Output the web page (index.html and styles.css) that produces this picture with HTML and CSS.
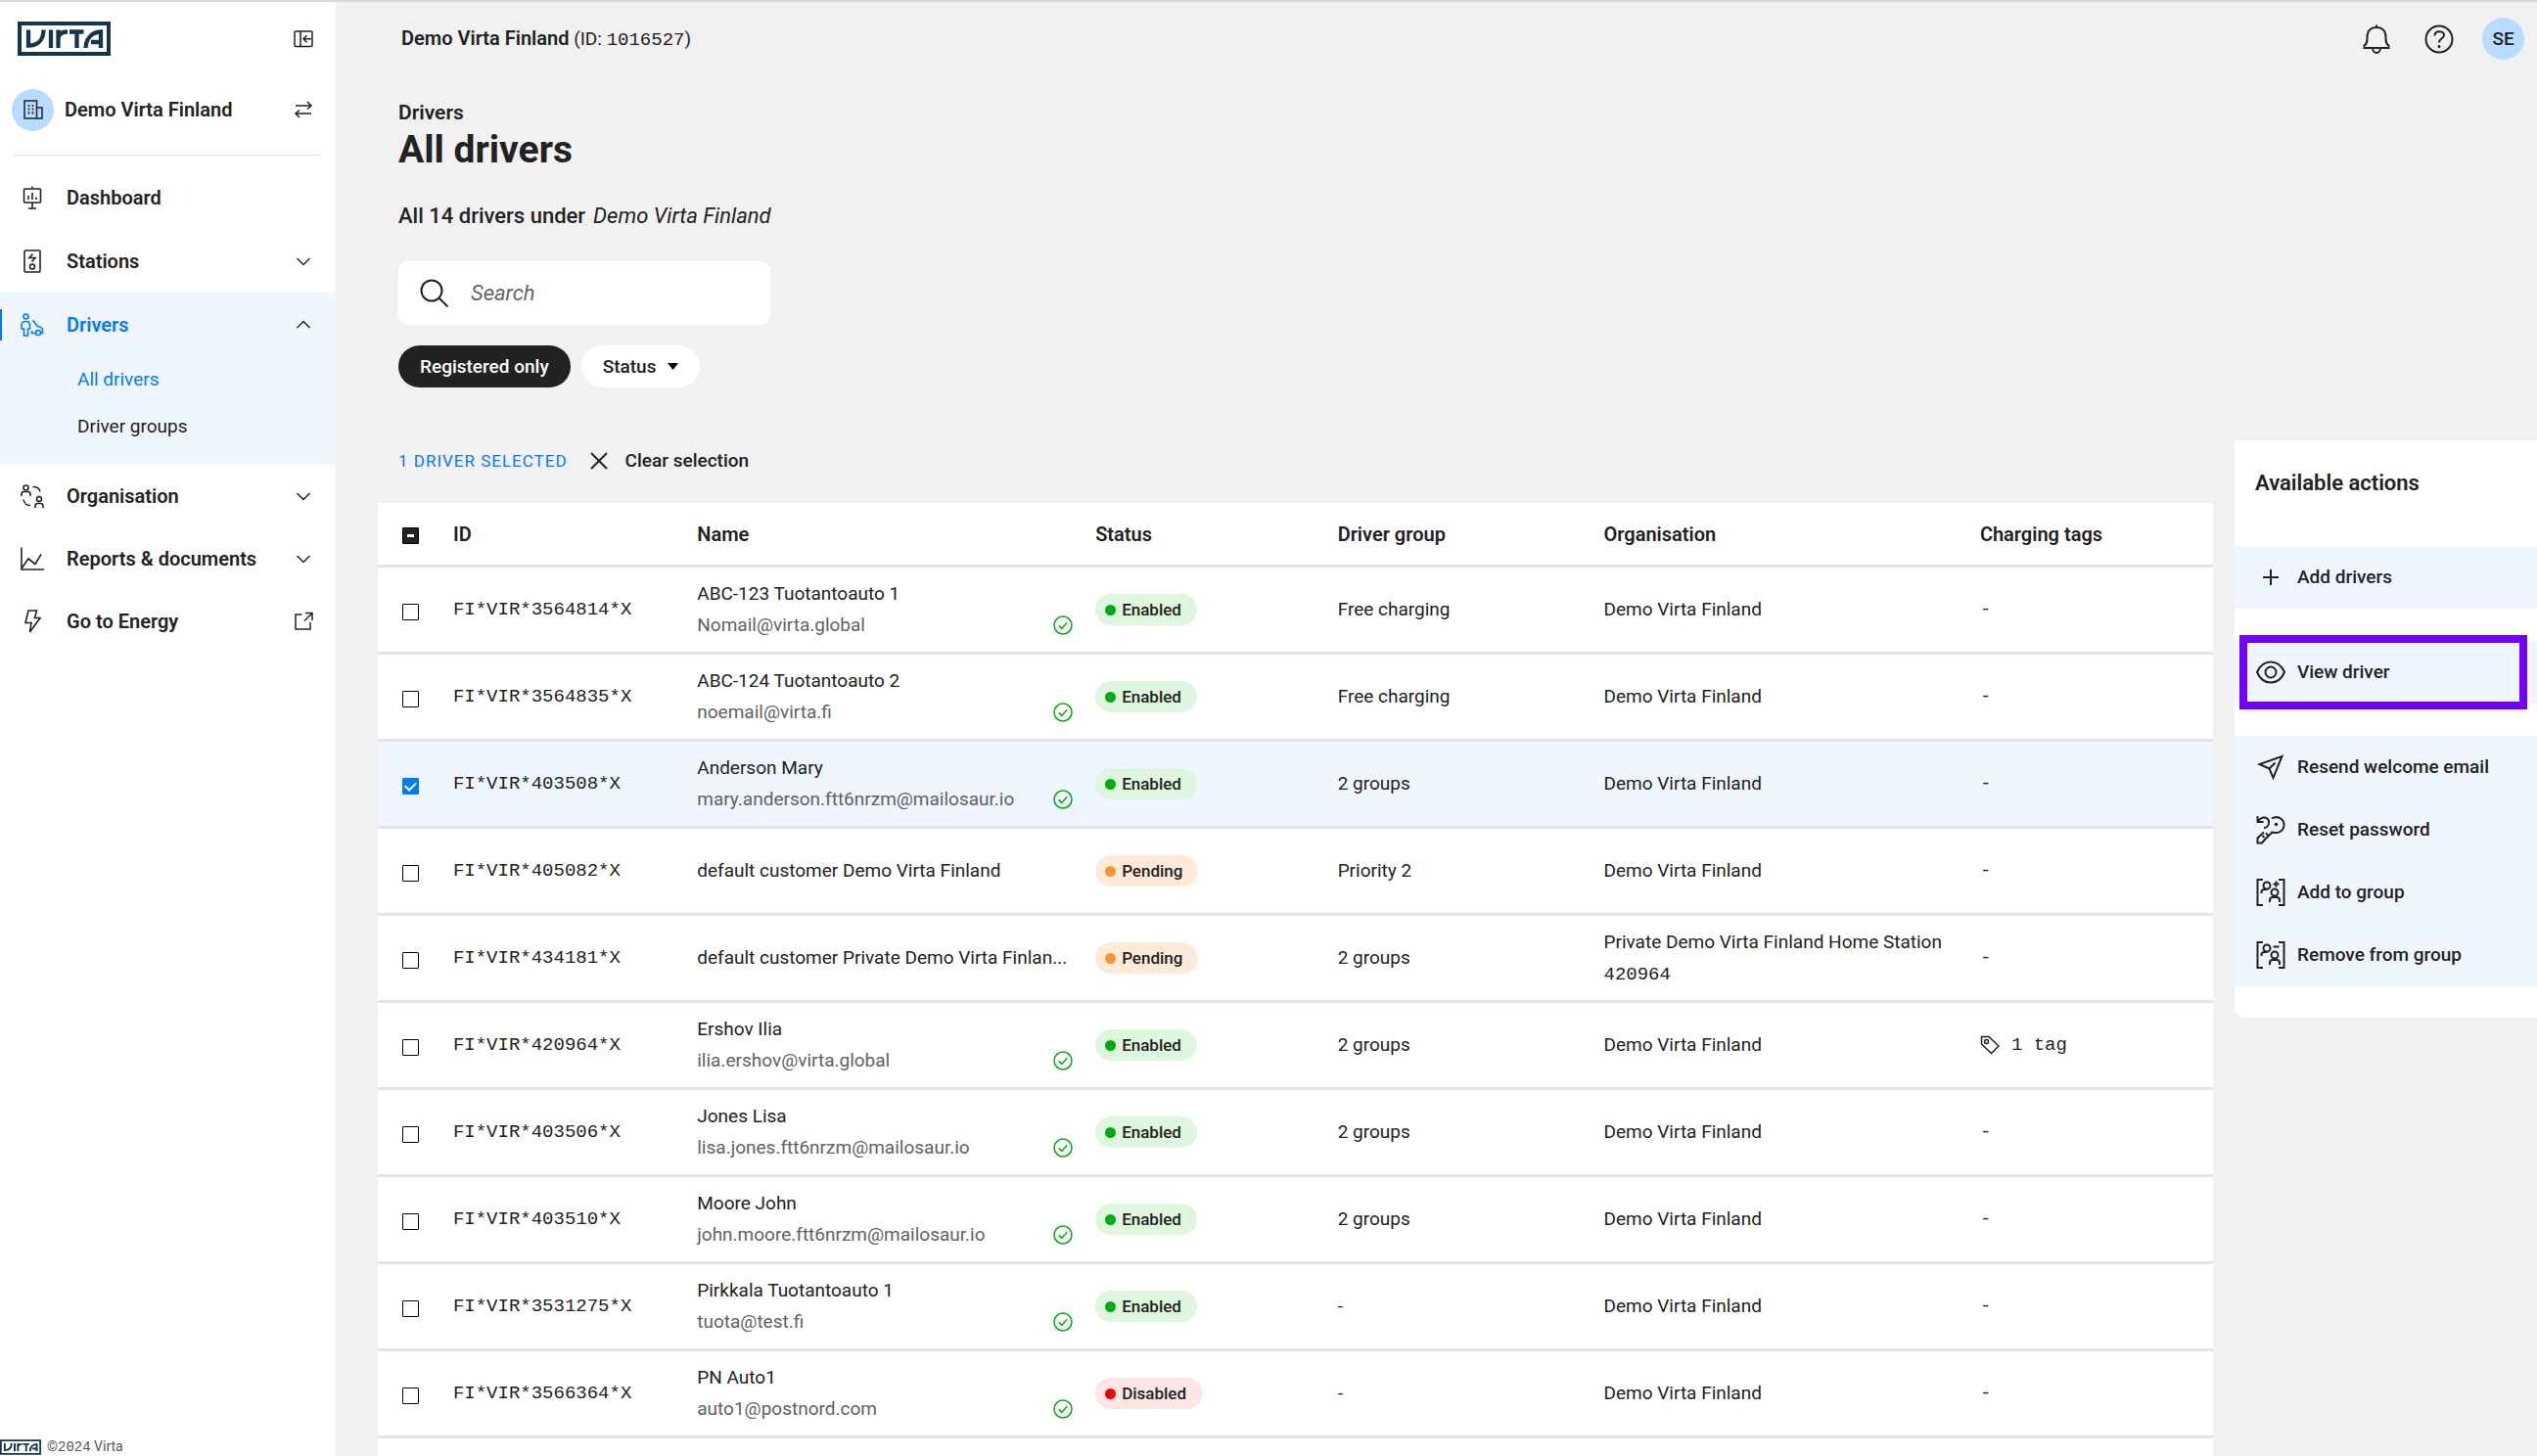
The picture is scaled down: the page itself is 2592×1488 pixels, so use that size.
FILE: index.html
```html
<!DOCTYPE html>
<html lang="en">
<head>
<meta charset="utf-8">
<meta name="viewport" content="width=device-width, initial-scale=1">
<title>All drivers - Virta</title>
<link rel="stylesheet" href="styles.css">
</head>
<body>
<svg class="sprite" aria-hidden="true">
  <symbol id="logo" viewBox="0 0 95 35">
    <path d="M2 2H93V33H2Z" stroke-width="4"/>
    <path d="M11 8.500V24.500C20.500 24.500 26.500 19 26.500 8.500M34 8.500V27M41.500 8.500V27M41.500 17C42 12.500 45 10.500 51 10.500M53 10.500H67.500M60.500 10.500V27M69.500 27C70 17.500 75.500 11 85 10.500V27M75 21H85" stroke-width="4.300"/>
  </symbol>
  <symbol id="chevron" viewBox="0 0 20 20"><path d="M3.500 7l6.500 6.500L16.500 7"/></symbol>
  <symbol id="verified" viewBox="0 0 20 20"><circle cx="10" cy="10" r="9"/><path d="M5.800 10.400l3 3 5.400-6.200"/></symbol>
</svg>

<div class="app">
  <aside class="sidebar">
    <div class="brand">
      <a href="#" aria-label="Virta"><svg class="logo"><use href="#logo"/></svg></a>
      <button class="icon-button" type="button" aria-label="Collapse menu"><svg class="icon-small" viewBox="0 0 20 20"><rect x="1" y="2" width="18" height="15.500" rx="1"/><path d="M7 2v15.500M18 9.800H10.500M13.500 6.300L10 9.800l3.500 3.500"/></svg></button>
    </div>
    <div class="tenant">
      <span class="avatar"><svg class="icon-small" viewBox="0 0 20 20"><path d="M1 19V1h12.500v18zM13.500 8H19v11h-5.500"/><path d="M5.500 5v2M5.500 8.500v2M5.500 12v2.500M9.500 5v2M9.500 8.500v2M9.500 12v2.500"/></svg></span>
      <span class="tenant-name">Demo Virta Finland</span>
      <button class="icon-button" type="button" aria-label="Switch organisation"><svg class="icon-small" viewBox="0 0 20 20"><path d="M2 6h16M14 2l4 4-4 3.500M18 14H2M6 10.500L2 14l4 4"/></svg></button>
    </div>
    <nav class="nav">
      <a class="nav-item" href="#"><svg class="icon" viewBox="0 0 24 24"><rect x="3.500" y="3" width="17" height="14" rx="1"/><path d="M12 .500V3M12 17v6M8 23h8M8 10v4M12 7v7M16 11.500V14"/></svg><span>Dashboard</span></a>
      <a class="nav-item" href="#"><svg class="icon" viewBox="0 0 24 24"><rect x="4" y="1" width="16" height="22" rx="1"/><path d="M12.500 4.500L9 8.500h6l-3.500 4"/><circle cx="12" cy="17.500" r="2.500"/></svg><span>Stations</span><svg class="icon-small"><use href="#chevron"/></svg></a>
      <div class="nav-group">
        <a class="nav-item current" href="#"><svg class="icon" viewBox="0 0 24 24"><circle cx="5.500" cy="3.500" r="2.500"/><path d="M3.500 23h4v-7h2v-4c0-2.300-1.500-3.500-4-3.500S1 9.700 1 12v4h2.500zM12 7.500c3 1 3.500 4.500 5.500 6 2.500.500 5 1 5 3V20.500h-2M15.500 20.500H11.500v-2.500"/><circle cx="18" cy="20" r="2.500"/></svg><span>Drivers</span><svg class="icon-small up"><use href="#chevron"/></svg></a>
        <a class="sub-item current" href="#">All drivers</a>
        <a class="sub-item" href="#">Driver groups</a>
      </div>
      <a class="nav-item" href="#"><svg class="icon" viewBox="0 0 24 24"><circle cx="5.500" cy="3.500" r="2.500"/><path d="M1 12V10c0-1.500 1-2.500 2.500-2.500h4C9 7.500 10 8.500 10 10v2M12.500 2.500c4 0 7 1.500 7.500 5M3 15.500c.500 3.500 3.500 6 7 6M15 24v-2c0-1.500 1-2.500 2.500-2.500h3c1.500 0 2.500 1 2.500 2.500v2"/><circle cx="19" cy="15" r="2.500"/></svg><span>Organisation</span><svg class="icon-small"><use href="#chevron"/></svg></a>
      <a class="nav-item" href="#"><svg class="icon" viewBox="0 0 24 24"><path d="M1 .500V23h23M1 22l7-10 7 5.500 6-10"/></svg><span>Reports &amp; documents</span><svg class="icon-small"><use href="#chevron"/></svg></a>
      <a class="nav-item" href="#"><svg class="icon" viewBox="0 0 24 24"><path d="M8 1h8.500l-2 7.500H20L9.500 23l1.500-9.500H5z"/></svg><span>Go to Energy</span><svg class="icon-small" viewBox="0 0 20 20"><path d="M8.500 3H2v15h15V11M12 1.500h7V9M19 1.500L11 9.500"/></svg></a>
    </nav>
    <footer class="copyright"><svg class="logo-small"><use href="#logo"/></svg><span>©<span class="num">2024</span> Virta</span></footer>
  </aside>

  <main class="main">
    <header class="topbar">
      <p class="topbar-org"><strong>Demo Virta Finland</strong> (ID: <span class="num">1016527</span>)</p>
      <button class="icon-button" type="button" aria-label="Notifications"><svg class="icon-large" viewBox="0 0 30 30"><path d="M15 3V0.500M2.500 24v-2.500C5.500 20 5.500 17 5.500 13 5.500 7 9 3 15 3s9.500 4 9.500 10c0 4 0 7 3 8.500V24zM11 24c0 6.500 8 6.500 8 0"/></svg></button>
      <button class="icon-button" type="button" aria-label="Help"><svg class="icon-large" viewBox="0 0 30 30"><circle cx="15" cy="15" r="13.500"/><path d="M10.500 11.500c0-6 9.500-5.500 9.500-.500 0 3.500-5 3-5 7.500"/><circle class="dot" cx="15" cy="22.500" r="1.500"/></svg></button>
      <button class="avatar" type="button">SE</button>
    </header>

    <div class="intro">
      <p class="section">Drivers</p>
      <h1>All drivers</h1>
      <p class="summary"><span>All 14 drivers under</span><em>Demo Virta Finland</em></p>
      <label class="search"><svg class="icon-large" viewBox="0 0 30 30"><circle cx="12" cy="12" r="10.500"/><path d="M19.500 19.500l9 9"/></svg><input type="search" placeholder="Search" aria-label="Search"></label>
      <div class="filters">
        <button class="chip active" type="button" aria-pressed="true">Registered only</button>
        <button class="chip" type="button" aria-haspopup="true">Status<svg class="caret" viewBox="0 0 11 7"><path d="M0 0h11L5.500 7z"/></svg></button>
      </div>
    </div>

    <div class="columns">
      <section class="list">
        <div class="selection">
          <span class="selected-count">1 driver selected</span>
          <button class="clear" type="button"><svg class="icon-small" viewBox="0 0 20 20"><path d="M2 2l16 16M18 2L2 18"/></svg>Clear selection</button>
        </div>
        <div class="table-card">
        <table class="drivers">
          <colgroup><col class="c-check"><col class="c-id"><col class="c-name"><col class="c-status"><col class="c-group"><col class="c-org"><col class="c-tags"></colgroup>
          <thead>
            <tr><th><input class="mixed" type="checkbox" aria-label="Select all"></th><th>ID</th><th>Name</th><th>Status</th><th>Driver group</th><th>Organisation</th><th>Charging tags</th></tr>
          </thead>
          <tbody>
            <tr><td><input type="checkbox" aria-label="Select ABC-123"></td><td class="num">FI*VIR*3564814*X</td><td><div>ABC-123 Tuotantoauto 1</div><div class="email"><span>Nomail@virta.global</span><svg><use href="#verified"/></svg></div></td><td><span class="pill enabled">Enabled</span></td><td>Free charging</td><td>Demo Virta Finland</td><td class="num">-</td></tr>
            <tr><td><input type="checkbox" aria-label="Select ABC-124"></td><td class="num">FI*VIR*3564835*X</td><td><div>ABC-124 Tuotantoauto 2</div><div class="email"><span>noemail@virta.fi</span><svg><use href="#verified"/></svg></div></td><td><span class="pill enabled">Enabled</span></td><td>Free charging</td><td>Demo Virta Finland</td><td class="num">-</td></tr>
            <tr class="selected"><td><input type="checkbox" checked aria-label="Select Anderson Mary"></td><td class="num">FI*VIR*403508*X</td><td><div>Anderson Mary</div><div class="email"><span>mary.anderson.ftt6nrzm@mailosaur.io</span><svg><use href="#verified"/></svg></div></td><td><span class="pill enabled">Enabled</span></td><td>2 groups</td><td>Demo Virta Finland</td><td class="num">-</td></tr>
            <tr><td><input type="checkbox" aria-label="Select default customer"></td><td class="num">FI*VIR*405082*X</td><td>default customer Demo Virta Finland</td><td><span class="pill pending">Pending</span></td><td>Priority 2</td><td>Demo Virta Finland</td><td class="num">-</td></tr>
            <tr><td><input type="checkbox" aria-label="Select default customer Private"></td><td class="num">FI*VIR*434181*X</td><td>default customer Private Demo Virta Finlan...</td><td><span class="pill pending">Pending</span></td><td>2 groups</td><td>Private Demo Virta Finland Home Station <span class="num">420964</span></td><td class="num">-</td></tr>
            <tr><td><input type="checkbox" aria-label="Select Ershov Ilia"></td><td class="num">FI*VIR*420964*X</td><td><div>Ershov Ilia</div><div class="email"><span>ilia.ershov@virta.global</span><svg><use href="#verified"/></svg></div></td><td><span class="pill enabled">Enabled</span></td><td>2 groups</td><td>Demo Virta Finland</td><td class="num"><span class="tag"><svg class="icon-small" viewBox="0 0 20 20"><path d="M1.500 1.500h7.500L19 11l-7.500 7.500L1.500 9z"/><circle cx="6.500" cy="6.500" r="2"/></svg>1 tag</span></td></tr>
            <tr><td><input type="checkbox" aria-label="Select Jones Lisa"></td><td class="num">FI*VIR*403506*X</td><td><div>Jones Lisa</div><div class="email"><span>lisa.jones.ftt6nrzm@mailosaur.io</span><svg><use href="#verified"/></svg></div></td><td><span class="pill enabled">Enabled</span></td><td>2 groups</td><td>Demo Virta Finland</td><td class="num">-</td></tr>
            <tr><td><input type="checkbox" aria-label="Select Moore John"></td><td class="num">FI*VIR*403510*X</td><td><div>Moore John</div><div class="email"><span>john.moore.ftt6nrzm@mailosaur.io</span><svg><use href="#verified"/></svg></div></td><td><span class="pill enabled">Enabled</span></td><td>2 groups</td><td>Demo Virta Finland</td><td class="num">-</td></tr>
            <tr><td><input type="checkbox" aria-label="Select Pirkkala"></td><td class="num">FI*VIR*3531275*X</td><td><div>Pirkkala Tuotantoauto 1</div><div class="email"><span>tuota@test.fi</span><svg><use href="#verified"/></svg></div></td><td><span class="pill enabled">Enabled</span></td><td>-</td><td>Demo Virta Finland</td><td class="num">-</td></tr>
            <tr><td><input type="checkbox" aria-label="Select PN Auto1"></td><td class="num">FI*VIR*3566364*X</td><td><div>PN Auto1</div><div class="email"><span>auto1@postnord.com</span><svg><use href="#verified"/></svg></div></td><td><span class="pill disabled">Disabled</span></td><td>-</td><td>Demo Virta Finland</td><td class="num">-</td></tr>
          </tbody>
        </table>
        </div>
      </section>

      <aside class="actions">
        <h2>Available actions</h2>
        <div class="action-band">
          <button class="action" type="button"><svg class="icon-large" viewBox="0 0 30 30"><path d="M15 7v16M7 15h16"/></svg>Add drivers</button>
        </div>
        <div class="action-band highlighted">
          <button class="action" type="button"><svg class="icon-large" viewBox="0 0 30 30"><path d="M1 15C4 8 9 4.500 15 4.500S26 8 29 15C26 22 21 25.500 15 25.500S4 22 1 15z"/><circle cx="15" cy="15" r="5.500"/></svg>View driver</button>
        </div>
        <div class="action-band">
          <button class="action" type="button"><svg class="icon-large" viewBox="0 0 30 30"><path d="M26.500 4L3.500 12l10 4.500 4 9.500zM13.500 16.500l6-6"/></svg>Resend welcome email</button>
          <button class="action" type="button"><svg class="icon-large" viewBox="0 0 30 30"><path d="M1.500 1v6h6M2 6.500C6 0 13 2 13 7.500c0 3-2 5.500-5 5.500M16 3.500C22 0 28.500 4 28.500 10c0 6-6 9.500-12 7.500L8.500 25.500 6 28.500H1.500V23.500L8 17.500M6.500 21l2 2M10 18.500l2 2"/><circle class="dot" cx="20.500" cy="9.500" r="1.800"/></svg>Reset password</button>
          <button class="action" type="button"><svg class="icon-large" viewBox="0 0 30 30"><path d="M7 2H1.500v26H7M23 2h5.500v26H23M5.500 16v-1.500c0-1.500 1-2.500 3-2.500h3M14 25v-2c0-2 1-3 3-3h4c2 0 3 1 3 3v2M20.500 3.500v6M17.500 6.500h6"/><circle cx="11" cy="8" r="3.500"/><circle cx="19" cy="15" r="3.500"/></svg>Add to group</button>
          <button class="action" type="button"><svg class="icon-large" viewBox="0 0 30 30"><path d="M7 2H1.500v26H7M23 2h5.500v26H23M5.500 16v-1.500c0-1.500 1-2.500 3-2.500h3M14 25v-2c0-2 1-3 3-3h4c2 0 3 1 3 3v2M17.500 6.500h6"/><circle cx="11" cy="8" r="3.500"/><circle cx="19" cy="15" r="3.500"/></svg>Remove from group</button>
        </div>
      </aside>
    </div>
  </main>
</div>
</body>
</html>
```
FILE: styles.css
```css
:root {
  --ink: #222;
  --muted: #626262;
  --blue: #007aff;
  --tint: #eff6ff;
  --line: #e5e5e5;
  --page: #f1f1f1;
}

* { box-sizing: border-box; }

body {
  margin: 0;
  background: var(--page);
  color: var(--ink);
  font: 400 19px/32px Roboto, "Noto Sans", sans-serif;
}

h1, h2, p { margin: 0; }
a { color: inherit; text-decoration: none; }

button {
  border: 0;
  padding: 0;
  background: none;
  color: inherit;
  font: inherit;
  cursor: pointer;
}

svg {
  flex: none;
  display: block;
  fill: none;
  stroke: currentColor;
  stroke-width: 2;
}

.sprite { position: absolute; width: 0; height: 0; }
.icon-small { width: 20px; height: 20px; stroke-width: 1.5; }
.icon { width: 24px; height: 24px; stroke-width: 1.6; }
.icon-large { width: 30px; height: 30px; }
.dot { fill: currentColor; stroke: none; }
.num { font-family: "Liberation Mono", monospace; }

.app {
  display: grid;
  grid-template-columns: 343px minmax(0, 1fr);
  height: 100vh;
  border-top: 2px solid #d9d9d9;
}

/* Sidebar */

.sidebar {
  display: flex;
  flex-direction: column;
  background: #fff;
}

.brand,
.tenant {
  display: flex;
  align-items: center;
  justify-content: space-between;
  padding-right: 23px;
}

.brand { height: 75px; padding-left: 18px; }
.logo { width: 95px; height: 35px; color: #17344f; }

.tenant {
  height: 70px;
  gap: 11px;
  padding-left: 12px;
}

.tenant-name { flex: 1; font-size: 20px; font-weight: 600; }

.avatar {
  display: grid;
  place-items: center;
  width: 43px;
  height: 43px;
  border-radius: 50%;
  background: #b8dbff;
  font-weight: 500;
}

.nav::before {
  content: "";
  display: block;
  height: 1px;
  margin: 11px 16px 10px 14px;
  background: #ddd;
}

.nav-item {
  position: relative;
  display: flex;
  align-items: center;
  gap: 23px;
  height: 65px;
  padding: 0 23px 0 21px;
  font-size: 20px;
  font-weight: 600;
}

.nav-item span { flex: 1; }
.nav-item .up { transform: rotate(180deg); color: var(--ink); }
.nav-group { padding-bottom: 15px; background: var(--tint); }
.nav-group ~ .nav-item { height: 64px; }
.nav-item.current, .sub-item.current { color: var(--blue); }

.nav-item.current::before {
  content: "";
  position: absolute;
  left: 0;
  width: 2px;
  height: 32px;
  background: var(--blue);
}

.sub-item {
  display: block;
  padding-left: 79px;
  line-height: 48px;
}

.copyright {
  display: flex;
  align-items: center;
  gap: 6px;
  margin-top: auto;
  color: #555;
  font-size: 14px;
  line-height: 18px;
}

.logo-small { width: 42px; height: 16px; color: #17344f; }

/* Main column */

.main {
  display: flex;
  flex-direction: column;
  padding-left: 43px;
  overflow: hidden;
}

.topbar {
  display: flex;
  align-items: center;
  gap: 34px;
  height: 75px;
  padding: 0 13px 0 24px;
}

.topbar-org { flex: 1; }
.topbar-org strong { font-size: 20px; font-weight: 600; }
.topbar .avatar { margin-left: -5px; }

.intro { padding: 25px 21px 0; }
.section { font-size: 21px; font-weight: 600; line-height: 26px; }
h1 { font-size: 39px; font-weight: 700; line-height: 50px; }

.summary {
  display: flex;
  gap: 8px;
  margin-top: 28px;
  font-size: 22px;
  font-weight: 500;
  line-height: 30px;
}

.summary em { font-weight: 400; }

.search {
  display: flex;
  align-items: center;
  gap: 22px;
  width: 380px;
  height: 65px;
  margin-top: 31px;
  padding: 0 22px;
  border-radius: 10px;
  background: #fff;
}

.search input {
  width: 100%;
  border: 0;
  padding: 0;
  outline: 0;
  background: none;
  font: italic 22px/30px Roboto, sans-serif;
}

.search input::placeholder { color: #666; }

.filters { display: flex; gap: 11px; margin-top: 21px; }

.chip {
  display: flex;
  align-items: center;
  gap: 12px;
  height: 43px;
  padding: 0 22px;
  border-radius: 22px;
  background: #fff;
  font-weight: 500;
}

.chip.active { background: var(--ink); color: #fff; }
.caret { width: 11px; height: 7px; fill: #000; stroke: none; }

.columns {
  flex: 1;
  display: grid;
  grid-template-columns: minmax(0, 1fr) 309px;
  align-items: start;
  gap: 22px;
  margin-top: 54px;
}

.list {
  display: flex;
  flex-direction: column;
  height: 100%;
}

.selection {
  display: flex;
  align-items: center;
  gap: 22px;
  height: 42px;
  margin-bottom: 22px;
  padding-left: 21px;
}

.selected-count {
  color: var(--blue);
  font-size: 17px;
  letter-spacing: 1px;
  text-transform: uppercase;
}

.clear { display: flex; align-items: center; gap: 17px; font-weight: 500; }
.clear svg { stroke-width: 2; }

/* Table */

.table-card { flex: 1; background: #fff; }

.drivers {
  width: 100%;
  border-spacing: 0;
  table-layout: fixed;
}

.c-check { width: 4.1%; }
.c-id { width: 13.3%; }
.c-name { width: 21.7%; }
.c-status { width: 13.2%; }
.c-group { width: 14.5%; }
.c-org { width: 20.5%; }

.drivers th,
.drivers td {
  height: 89px;
  padding: 0;
  border-bottom: 3px solid var(--line);
  text-align: left;
}

.drivers th { height: 66px; font-size: 20px; font-weight: 600; }
.drivers td:nth-child(3), .drivers td:nth-child(6) { padding-right: 23px; }
.drivers th:first-child, .drivers td:first-child { padding-left: 25px; }
.selected { background: var(--tint); }

.drivers input {
  appearance: none;
  display: grid;
  place-items: center;
  width: 17px;
  height: 17px;
  margin: 4px 0 0;
  border: 1px solid #000;
  border-radius: 1px;
}

.drivers input.mixed { background: var(--ink); }
.drivers input.mixed::before { content: ""; width: 7px; height: 3px; background: #fff; }
.drivers input:checked { border-color: var(--blue); background: var(--blue); }

.drivers input:checked::before {
  content: "";
  width: 9px;
  height: 5px;
  margin-top: -2px;
  border: solid #fff;
  border-width: 0 0 2px 2px;
  transform: rotate(-45deg);
}

.email {
  display: flex;
  align-items: center;
  justify-content: space-between;
  color: var(--muted);
}

.email svg { width: 20px; height: 20px; color: #00ab0e; stroke-width: 1.5; }

.pill {
  display: inline-flex;
  align-items: center;
  gap: 6px;
  height: 32px;
  padding: 0 16px 0 10px;
  border-radius: 16px;
  font-size: 17px;
  font-weight: 500;
  vertical-align: middle;
}

.pill::before {
  content: "";
  width: 11px;
  height: 11px;
  border-radius: 50%;
}

.enabled { background: #def5de; }
.enabled::before { background: #00ab0e; }
.pending { background: #feead9; }
.pending::before { background: #f79433; }
.disabled { background: #fee5e5; }
.disabled::before { background: #f50000; }

.tag { display: flex; align-items: center; gap: 12px; }

/* Actions panel */

.actions {
  padding-bottom: 32px;
  border-bottom-left-radius: 10px;
  background: #fff;
}

.actions h2 {
  height: 108px;
  padding: 28px 21px;
  font-size: 22px;
  font-weight: 600;
}

.action-band { background: var(--tint); }
.action-band + .action-band { margin-top: 33px; }

.action {
  display: flex;
  align-items: center;
  gap: 12px;
  width: 100%;
  height: 64px;
  padding-left: 22px;
  font-weight: 500;
}

.highlighted { position: relative; }

/* Frame drawn over the band, reaching past it above and below */
.highlighted::after {
  content: "";
  position: absolute;
  inset: -6px 10px -6px 5px;
  border: 8px solid #7300ff;
}
```
